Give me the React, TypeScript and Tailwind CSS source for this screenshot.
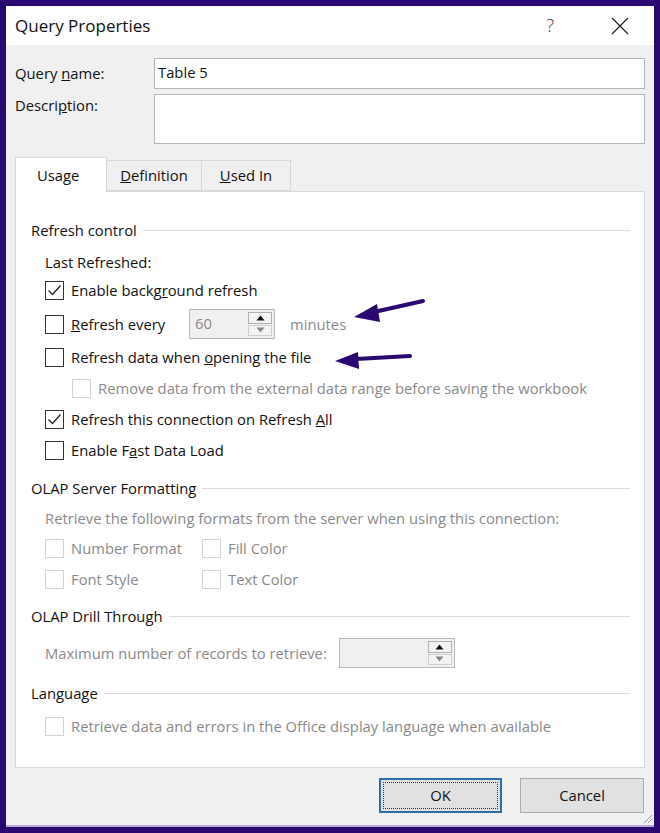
import React from "react";

const font = { fontFamily: '"Open Sans", "Noto Sans", sans-serif' };

function Check({ checked = false, disabled = false }: { checked?: boolean; disabled?: boolean }) {
  return (
    <span
      className={`w-[19px] h-[19px] shrink-0 border bg-white flex items-center justify-center ${
        disabled ? "border-[#d4d4d4]" : "border-[#333]"
      }`}
    >
      {checked && (
        <svg width="15" height="13" viewBox="0 0 15 13" fill="none" stroke="#222" strokeWidth="1.3">
          <path d="M1.5 6.5 L5.5 10.5 L13.5 1.5" />
        </svg>
      )}
    </span>
  );
}

function Row({
  children,
  checked,
  disabled,
  indent = false,
}: {
  children: React.ReactNode;
  checked?: boolean;
  disabled?: boolean;
  indent?: boolean;
}) {
  return (
    <div className={`flex items-center h-[31px] gap-[7px] ${indent ? "pl-[27px]" : ""}`}>
      <Check checked={checked} disabled={disabled} />
      <span className={disabled ? "text-[#8a8a8a]" : "text-[#111]"}>{children}</span>
    </div>
  );
}

function Group({ title }: { title: string }) {
  return (
    <div className="flex items-center gap-[6px] pl-[15px] pr-[14px] h-[30px]">
      <span className="text-[#111]">{title}</span>
      <span className="flex-1 h-px bg-[#dcdcdc]" />
    </div>
  );
}

function Spinner({ value, width }: { value: string; width: string }) {
  return (
    <div className={`${width} h-[30px] border border-[#b9b9b9] bg-[#f0f0f0] flex items-stretch p-[2px]`}>
      <span className="flex-1 pl-[3px] text-[#8a8a8a] leading-[22px]">{value}</span>
      <div className="w-[24px] flex flex-col gap-px">
        <div className="flex-1 border border-[#b0b0b0] bg-[#f3f3f3] flex items-center justify-center">
          <svg width="9" height="6" viewBox="0 0 9 6">
            <path d="M0.5 5.5 L4.5 0.5 L8.5 5.5 Z" fill="#111" />
          </svg>
        </div>
        <div className="flex-1 border border-[#d0d0d0] bg-[#f3f3f3] flex items-center justify-center">
          <svg width="9" height="6" viewBox="0 0 9 6">
            <path d="M0.5 0.5 L4.5 5.5 L8.5 0.5 Z" fill="#888" />
          </svg>
        </div>
      </div>
    </div>
  );
}

export default function App() {
  return (
    <div className="w-[660px] h-[833px] bg-[#2a0872] p-[6px] overflow-hidden" style={font}>
      <div className="relative w-full h-full flex flex-col text-[14.8px] border-b-2 border-[#b7a9d6]">
        {/* title bar */}
        <div className="h-[39px] bg-white flex items-center pl-[9px] pr-[25px] shrink-0">
          <span className="text-[17px] text-[#111] flex-1">Query Properties</span>
          <span className="text-[18px] text-[#333] mr-[57px] font-light">?</span>
          <svg width="18" height="18" viewBox="0 0 18 18" stroke="#222" strokeWidth="1.2">
            <path d="M1 1 L17 17 M17 1 L1 17" />
          </svg>
        </div>

        <div className="flex-1 bg-[#f0f0f0] flex flex-col px-[9px]">
          {/* name */}
          <div className="flex items-center mt-[13px] h-[31px]">
            <span className="w-[139px] text-[#111]">
              Query <span className="underline">n</span>ame:
            </span>
            <div className="flex-1 h-[31px] border border-[#b5b5b5] bg-white pl-[3px] leading-[27px] text-[#111]">
              Table 5
            </div>
          </div>
          <div className="flex items-start mt-[5px]">
            <span className="w-[139px] text-[#111] leading-[22px]">
              Descri<span className="underline">p</span>tion:
            </span>
            <div className="flex-1 h-[50px] border border-[#b5b5b5] bg-white" />
          </div>

          {/* tabs */}
          <div className="flex items-end mt-[12px] h-[35px]">
            <div className="w-[92px] h-[35px] bg-white border border-b-0 border-[#d9d9d9] pl-[21px] pt-[6px] relative -mb-px z-10 text-[#111]">
              Usage
            </div>
            <div className="w-[95px] h-[31px] bg-[#f0f0f0] border border-l-0 border-[#d9d9d9] flex items-center justify-center text-[#111]">
              <span>
                <span className="underline">D</span>efinition
              </span>
            </div>
            <div className="w-[89px] h-[31px] bg-[#f0f0f0] border border-l-0 border-[#d9d9d9] flex items-center justify-center text-[#111]">
              <span>
                <span className="underline">U</span>sed In
              </span>
            </div>
          </div>

          {/* panel */}
          <div className="h-[577px] bg-white border border-[#d9d9d9] flex flex-col pt-[23px]">
            <Group title="Refresh control" />
            <div className="pl-[29px] flex flex-col">
              <div className="h-[30px] pt-[6px] text-[#111] leading-[22px]">Last Refreshed:</div>
              <Row checked>
                Enable backg<span className="underline">r</span>ound refresh
              </Row>
              <div className="flex items-center h-[36px] gap-[7px]">
                <Check />
                <span className="text-[#111] w-[111px]">
                  <span className="underline">R</span>efresh every
                </span>
                <Spinner value="60" width="w-[86px]" />
                <span className="text-[#8a8a8a] ml-[8px]">minutes</span>
              </div>
              <Row>
                Refresh data when <span className="underline">o</span>pening the file
              </Row>
              <Row indent disabled>
                Remove data from the external data range before saving the workbook
              </Row>
              <Row checked>
                Refresh this connection on Refresh <span className="underline">A</span>ll
              </Row>
              <Row>
                Enable F<span className="underline">a</span>st Data Load
              </Row>
            </div>

            <div className="mt-[7px]">
              <Group title="OLAP Server Formatting" />
            </div>
            <div className="pl-[29px] flex flex-col">
              <div className="h-[30px] flex items-center text-[#8a8a8a]">
                Retrieve the following formats from the server when using this connection:
              </div>
              <div className="grid grid-cols-[157px_1fr]">
                <Row disabled>Number Format</Row>
                <Row disabled>Fill Color</Row>
                <Row disabled>Font Style</Row>
                <Row disabled>Text Color</Row>
              </div>
            </div>

            <div className="mt-[6px]">
              <Group title="OLAP Drill Through" />
            </div>
            <div className="pl-[29px] flex items-center h-[44px] gap-[12px]">
              <span className="text-[#8a8a8a]">Maximum number of records to retrieve:</span>
              <Spinner value="" width="w-[116px]" />
            </div>

            <div className="mt-[3px]">
              <Group title="Language" />
            </div>
            <div className="pl-[29px] mt-[3px]">
              <Row disabled>Retrieve data and errors in the Office display language when available</Row>
            </div>
          </div>

          {/* buttons */}
          <div className="flex justify-end gap-[18px] mt-[10px] pr-[1px]">
            <button className="w-[123px] h-[35px] border-2 border-[#2f6fa8] bg-[#e1e1e1] p-[2px] text-[#111]">
              <span className="w-full h-full border border-dotted border-[#333] flex items-center justify-center">OK</span>
            </button>
            <button className="w-[124px] h-[35px] border border-[#adadad] bg-[#e1e1e1] text-[#111]">Cancel</button>
          </div>
        </div>

        {/* annotation arrows */}
        <svg className="absolute left-0 top-0 pointer-events-none" width="648" height="820">
          <path d="M417 295 L368 306" stroke="#2a0872" strokeWidth="4" strokeLinecap="round" />
          <path d="M348 311 L371 298 L374 316 Z" fill="#2a0872" />
          <path d="M404 350 L350 353" stroke="#2a0872" strokeWidth="4" strokeLinecap="round" />
          <path d="M329 355 L352 346 L353 363 Z" fill="#2a0872" />
        </svg>

        {/* resize grip */}
        <svg className="absolute right-[1px] bottom-[1px]" width="12" height="12" viewBox="0 0 12 12" stroke="#9a9a9a" strokeWidth="1">
          <path d="M11 3 L3 11 M11 7 L7 11" />
        </svg>
      </div>
    </div>
  );
}
